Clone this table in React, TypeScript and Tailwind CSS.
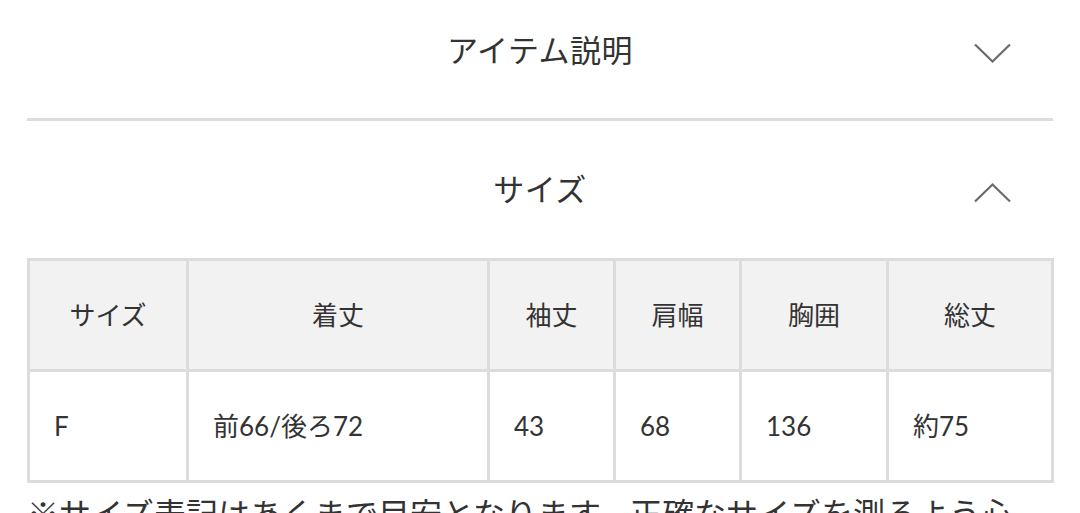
import React from 'react';

const font = "font-['Lato','Noto_Sans_CJK_JP',sans-serif]";

const headers = ['サイズ', '着丈', '袖丈', '肩幅', '胸囲', '総丈'];
const values = ['F', '前66/後ろ72', '43', '68', '136', '約75'];
const widths = ['w-[159px]', 'w-[301px]', 'w-[126px]', 'w-[126px]', 'w-[147px]', 'w-[165px]'];

function Chevron({ up }: { up?: boolean }) {
  return (
    <svg width="39" height="22" viewBox="0 0 39 22" fill="none" className="text-[#6b6b6b]">
      <path
        d={up ? 'M2 19.5 L19.5 2.5 L37 19.5' : 'M2 2.5 L19.5 19.5 L37 2.5'}
        stroke="currentColor"
        strokeWidth="2.2"
      />
    </svg>
  );
}

function AccordionHeader({ title, open, className }: { title: string; open?: boolean; className: string }) {
  return (
    <div className={`grid grid-cols-[1fr_auto_1fr] items-center ${className}`}>
      <div />
      <h2 className="text-[31px] text-[#333] tracking-[0.5px]">{title}</h2>
      <div className="flex justify-end pr-[41px] pt-[6px]">
        <Chevron up={open} />
      </div>
    </div>
  );
}

export default function App() {
  return (
    <div className={`w-[1080px] h-[513px] overflow-hidden bg-white ${font}`}>
      <div className="mx-[27px]">
        <AccordionHeader title="アイテム説明" className="h-[100px]" />
        <div className="h-[18px]" />
        <div className="h-[3px] bg-[#dddddd]" />

        <AccordionHeader title="サイズ" open className="h-[137px]" />

        <table className="border-collapse w-[1024px] table-fixed text-[#333] text-[26px]">
          <thead>
            <tr className="bg-[#f2f2f2] h-[111px]">
              {headers.map((h, i) => (
                <th key={h} className={`${widths[i]} border-[3px] border-[#dcdcdc] font-normal text-center`}>
                  {h}
                </th>
              ))}
            </tr>
          </thead>
          <tbody>
            <tr className="h-[111px]">
              {values.map((v, i) => (
                <td key={i} className={`${widths[i]} border-[3px] border-[#dcdcdc] pl-[24px] text-left`}>
                  {v}
                </td>
              ))}
            </tr>
          </tbody>
        </table>

        <p className="mt-[9px] text-[32px] leading-[44px] text-[#333] w-[1010px]">
          ※サイズ表記はあくまで目安となります。正確なサイズを測るよう心がけておりますが、多少の誤差が生じる場合がございます。
        </p>
      </div>
    </div>
  );
}
